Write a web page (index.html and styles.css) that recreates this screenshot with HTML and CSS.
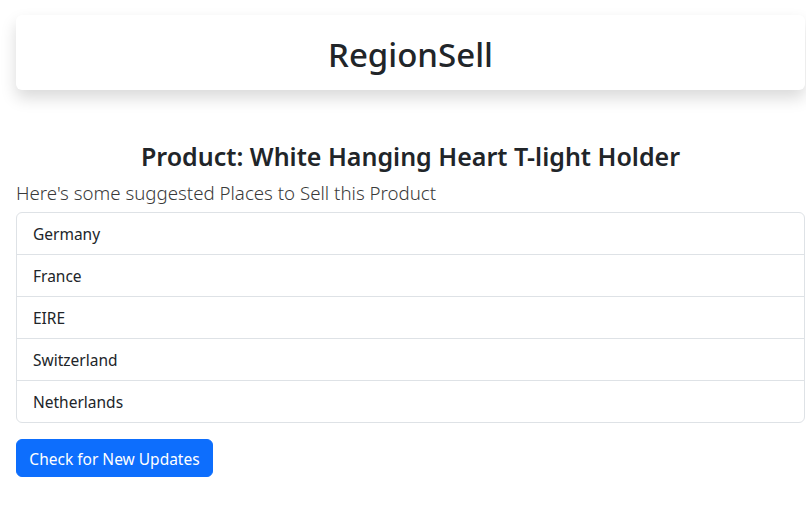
FILE: index.html
```html
<!DOCTYPE html>
<html lang="en">
<head>
<meta charset="utf-8">
<title>RegionSell</title>
<link rel="stylesheet" href="styles.css">
</head>
<body>
<div class="page">
  <header class="brand-card">
    <h1 class="brand">RegionSell</h1>
  </header>
  <main class="content">
    <h3 class="product">Product: White Hanging Heart T-light Holder</h3>
    <p class="lead">Here's some suggested Places to Sell this Product</p>
    <ul class="list-group">
      <li class="list-item">Germany</li>
      <li class="list-item">France</li>
      <li class="list-item">EIRE</li>
      <li class="list-item">Switzerland</li>
      <li class="list-item">Netherlands</li>
    </ul>
    <button class="btn" type="button">Check for New Updates</button>
  </main>
</div>
</body>
</html>
```
FILE: styles.css
```css
* { box-sizing: border-box; }
html, body { margin: 0; padding: 0; background: #fff; }
body {
  font-family: "Noto Sans", "Open Sans", sans-serif;
  color: #212529;
  font-size: 16px;
  line-height: 1.5;
}
.page {
  padding: 15px 0 0 16px;
  width: 805px;
}
.brand-card {
  background: #fff;
  border-radius: 6px;
  box-shadow: 0 8px 16px rgba(0,0,0,0.15);
  height: 75px;
  display: flex;
  align-items: center;
  justify-content: center;
  padding-top: 4px;
}
.brand {
  margin: 0;
  font-size: 33px;
  font-weight: 500;
  line-height: 1.2;
}
.content {
  padding-top: 51px;
}
.product {
  margin: 0;
  text-align: center;
  font-size: 25px;
  font-weight: 600;
  line-height: 1.2;
}
.lead {
  margin: 8px 0 5px;
  font-size: 18.7px;
  font-weight: 300;
  line-height: 28px;
  color: #3a3a3a;
}
.list-group {
  list-style: none;
  margin: 0 0 16px;
  padding: 0;
  border: 1px solid #dee2e6;
  border-radius: 6px;
}
.list-item {
  padding: 10px 16px 6px;
  border-top: 1px solid #dee2e6;
  height: 42px;
  font-size: 15.5px;
  color: #212529;
}
.list-item:first-child { border-top: 0; height: 41px; }
.btn {
  font-family: inherit;
  font-size: 15.5px;
  line-height: 1.5;
  color: #fff;
  background: #0d6efd;
  border: 1px solid #0d6efd;
  border-radius: 6px;
  padding: 8px 12px 4px;
  height: 38px;
  width: 197px;
  cursor: pointer;
}
```
